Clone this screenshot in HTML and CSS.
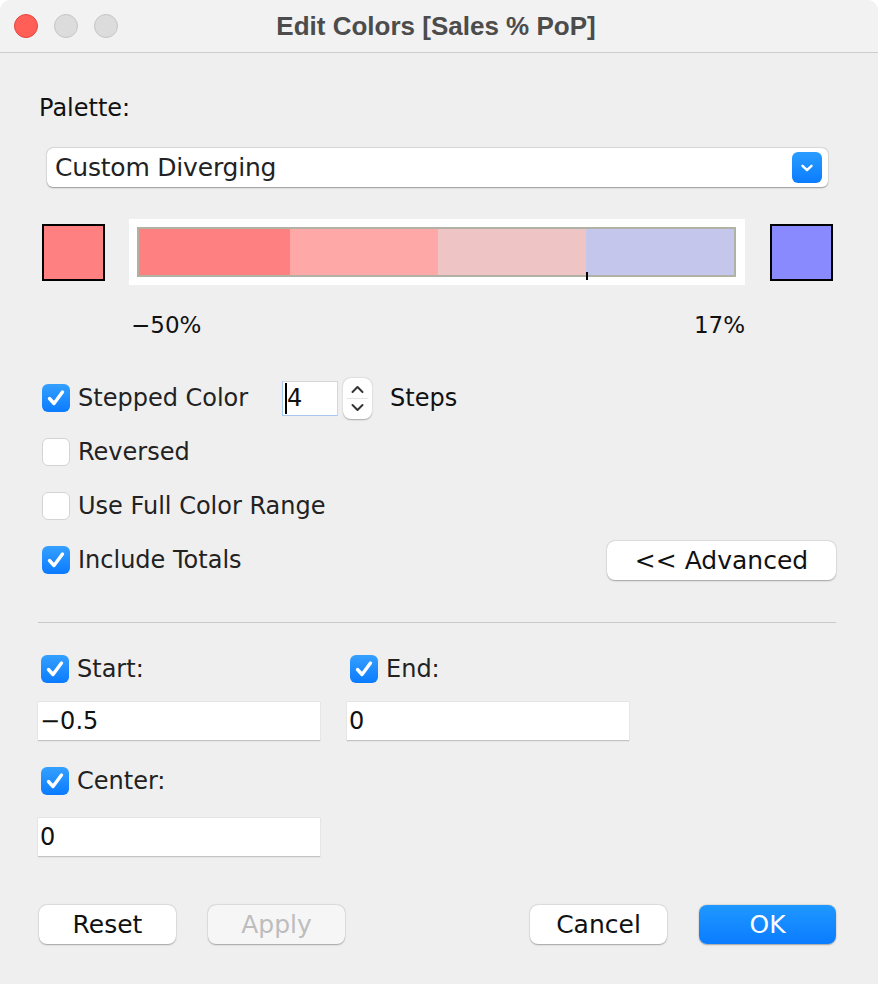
FILE: index.html
```html
<!DOCTYPE html>
<html>
<head>
<meta charset="utf-8">
<title>Edit Colors</title>
<link rel="stylesheet" href="styles.css">
</head>
<body>
<div class="window">
  <div class="titlebar">
    <div class="lights">
      <span class="light red"></span>
      <span class="light gray"></span>
      <span class="light gray"></span>
    </div>
    <div class="title">Edit Colors [Sales % PoP]</div>
    <div></div>
  </div>

  <div class="content">
    <div class="palette-label">Palette:</div>

    <div class="select">
      <span class="select-text">Custom Diverging</span>
      <span class="select-btn">
        <svg width="14" height="10" viewBox="0 0 14 10"><path d="M2.5 2.8 L7 7.2 L11.5 2.8" fill="none" stroke="#fff" stroke-width="2.4" stroke-linecap="round" stroke-linejoin="round"/></svg>
      </span>
    </div>

    <div class="ramp-row">
      <div class="swatch swatch-start"></div>
      <div class="ramp-panel">
        <div class="ramp">
          <div class="seg seg1"></div>
          <div class="seg seg2"></div>
          <div class="seg seg3"></div>
          <div class="seg seg4"></div>
          <span class="tick"></span>
        </div>
      </div>
      <div class="swatch swatch-end"></div>
    </div>

    <div class="ramp-labels">
      <span>−50%</span>
      <span>17%</span>
    </div>

    <div class="options">
      <div class="opt-row">
        <label class="check-label stepped">
          <span class="cb on"><svg width="28" height="28" viewBox="0 0 28 28"><path d="M7.5 14.5 L12 19.5 L20.5 8" fill="none" stroke="#fff" stroke-width="3.4" stroke-linecap="round" stroke-linejoin="round"/></svg></span>
          <span>Stepped Color</span>
        </label>
        <div class="num-input"><span class="caret"></span>4</div>
        <div class="stepper">
          <svg width="29" height="41" viewBox="0 0 29 41">
            <path d="M9.5 14 L14.5 9 L19.5 14" fill="none" stroke="#333" stroke-width="2" stroke-linecap="round" stroke-linejoin="round"/>
            <line x1="4" y1="20.5" x2="25" y2="20.5" stroke="#e4e4e4" stroke-width="1"/>
            <path d="M9.5 27 L14.5 32 L19.5 27" fill="none" stroke="#333" stroke-width="2" stroke-linecap="round" stroke-linejoin="round"/>
          </svg>
        </div>
        <span class="steps-label">Steps</span>
      </div>
      <div class="opt-row">
        <label class="check-label">
          <span class="cb"></span>
          <span>Reversed</span>
        </label>
      </div>
      <div class="opt-row">
        <label class="check-label">
          <span class="cb"></span>
          <span>Use Full Color Range</span>
        </label>
      </div>
      <div class="opt-row between">
        <label class="check-label">
          <span class="cb on"><svg width="28" height="28" viewBox="0 0 28 28"><path d="M7.5 14.5 L12 19.5 L20.5 8" fill="none" stroke="#fff" stroke-width="3.4" stroke-linecap="round" stroke-linejoin="round"/></svg></span>
          <span>Include Totals</span>
        </label>
        <button class="btn advanced">&lt;&lt; Advanced</button>
      </div>
    </div>

    <div class="separator"></div>

    <div class="range-grid">
      <div class="range-col">
        <label class="check-label small">
          <span class="cb on"><svg width="28" height="28" viewBox="0 0 28 28"><path d="M7.5 14.5 L12 19.5 L20.5 8" fill="none" stroke="#fff" stroke-width="3.4" stroke-linecap="round" stroke-linejoin="round"/></svg></span>
          <span>Start:</span>
        </label>
        <div class="field">−0.5</div>
      </div>
      <div class="range-col">
        <label class="check-label small">
          <span class="cb on"><svg width="28" height="28" viewBox="0 0 28 28"><path d="M7.5 14.5 L12 19.5 L20.5 8" fill="none" stroke="#fff" stroke-width="3.4" stroke-linecap="round" stroke-linejoin="round"/></svg></span>
          <span>End:</span>
        </label>
        <div class="field">0</div>
      </div>
      <div class="range-col center-col">
        <label class="check-label small">
          <span class="cb on"><svg width="28" height="28" viewBox="0 0 28 28"><path d="M7.5 14.5 L12 19.5 L20.5 8" fill="none" stroke="#fff" stroke-width="3.4" stroke-linecap="round" stroke-linejoin="round"/></svg></span>
          <span>Center:</span>
        </label>
        <div class="field">0</div>
      </div>
    </div>

    <div class="footer">
      <div class="btn-group">
        <button class="btn">Reset</button>
        <button class="btn disabled">Apply</button>
      </div>
      <div class="btn-group">
        <button class="btn">Cancel</button>
        <button class="btn primary">OK</button>
      </div>
    </div>
  </div>
</div>
</body>
</html>
```

FILE: styles.css
```css
html, body {
  margin: 0;
  padding: 0;
  background: #ffffff;
}

.window {
  width: 878px;
  height: 984px;
  background: #efefef;
  border-radius: 11px 11px 0 0;
  overflow: hidden;
  font-family: "DejaVu Sans", "Liberation Sans", sans-serif;
  color: #1e1e1e;
}

.titlebar {
  height: 52px;
  background: #f2f2f2;
  border-bottom: 1px solid #cdcdcd;
  display: grid;
  grid-template-columns: 1fr auto 1fr;
  align-items: center;
}

.lights {
  display: flex;
  gap: 16px;
  padding-left: 14px;
}

.light {
  width: 24px;
  height: 24px;
  border-radius: 50%;
  box-sizing: border-box;
}

.light.red {
  background: #ff5f57;
  border: 1px solid #e2463f;
}

.light.gray {
  background: #dcdcdc;
  border: 1px solid #c5c5c5;
}

.title {
  font-family: "Liberation Sans", Arial, sans-serif;
  font-weight: bold;
  font-size: 26px;
  color: #4c4c4c;
  transform: translateX(-3px);
}

.content {
  padding: 0 42px 0 38px;
}

.palette-label {
  margin-top: 42px;
  font-size: 24px;
  line-height: 26px;
  padding-left: 1px;
  color: #111;
}

.select {
  margin-top: 27px;
  margin-left: 9px;
  width: 781px;
  height: 39px;
  box-sizing: border-box;
  background: #fff;
  border-radius: 6px;
  box-shadow: 0 0.5px 1.5px rgba(0, 0, 0, 0.35), 0 0 0 0.5px rgba(0, 0, 0, 0.06);
  display: flex;
  align-items: center;
  justify-content: space-between;
  padding: 0 6px 0 8px;
}

.select-text {
  font-size: 25px;
  color: #222;
  letter-spacing: -0.2px;
}

.select-btn {
  width: 30px;
  height: 31px;
  border-radius: 6px;
  background: linear-gradient(#2b9dff, #0a7cff);
  display: flex;
  align-items: center;
  justify-content: center;
}

.ramp-row {
  margin-top: 32px;
  height: 66px;
  display: flex;
  align-items: center;
}

.swatch {
  width: 63px;
  height: 57px;
  box-sizing: border-box;
  border: 2px solid #000;
}

.swatch-start {
  margin-left: 4px;
  background: #ff8080;
}

.swatch-end {
  margin-left: 25px;
  background: #8a8aff;
}

.ramp-panel {
  margin-left: 24px;
  width: 616px;
  height: 66px;
  box-sizing: border-box;
  background: #fff;
  padding: 8px 9px 8px 8px;
}

.ramp {
  position: relative;
  height: 50px;
  box-sizing: border-box;
  border: 2px solid #b1b1a6;
  display: flex;
}

.seg {
  flex: 1;
}

.seg1 { background: #ff8080; flex: 0 0 151px; }
.seg2 { background: #ffa8a8; }
.seg3 { background: #efc4c4; }
.seg4 { background: #c5c6eb; }

.tick {
  position: absolute;
  left: 447px;
  top: 43px;
  width: 2px;
  height: 8px;
  background: #000;
}

.ramp-labels {
  margin-top: 27px;
  width: 614px;
  padding-left: 93px;
  display: flex;
  justify-content: space-between;
  font-size: 23px;
  line-height: 26px;
  color: #111;
}

.options {
  margin-top: 33px;
}

.opt-row {
  height: 54px;
  display: flex;
  align-items: center;
}

.opt-row.between {
  justify-content: space-between;
}

.check-label {
  display: flex;
  align-items: center;
  gap: 8px;
  font-size: 24px;
  color: #222;
  padding-left: 4px;
}

.check-label.stepped {
  width: 240px;
}

.cb {
  width: 28px;
  height: 28px;
  box-sizing: border-box;
  border-radius: 6px;
  background: #fff;
  border: 1px solid #d3d3d3;
  flex: none;
  display: flex;
}

.cb.on {
  background: linear-gradient(#35a0ff, #0a7bff);
  border: none;
}

.num-input {
  width: 56px;
  height: 35px;
  box-sizing: border-box;
  background: #fff;
  border: 1px solid #d6d6d6;
  border-left-color: #a9c8f0;
  border-bottom-color: #a9c8f0;
  font-size: 24px;
  line-height: 33px;
  padding-left: 2px;
  display: flex;
  align-items: center;
  color: #111;
}

.caret {
  width: 2px;
  height: 31px;
  background: #000;
}

.stepper {
  margin-left: 5px;
  width: 29px;
  height: 41px;
  background: #fff;
  border-radius: 8px;
  box-shadow: 0 0.5px 1.5px rgba(0, 0, 0, 0.3);
  display: flex;
}

.steps-label {
  margin-left: 18px;
  font-size: 24px;
  color: #111;
}

.btn {
  font-family: "DejaVu Sans", "Liberation Sans", sans-serif;
  font-size: 25px;
  color: #111;
  width: 137px;
  height: 39px;
  background: #fff;
  border: none;
  border-radius: 8px;
  box-shadow: 0 0.5px 1.5px rgba(0, 0, 0, 0.3), 0 0 0 0.5px rgba(0, 0, 0, 0.05);
  padding: 0;
}

.btn.advanced {
  width: 229px;
}

.btn.disabled {
  background: #f6f6f6;
  color: #bdbdbd;
}

.btn.primary {
  background: linear-gradient(#1f98ff, #0a7cff);
  color: #fff;
}

.separator {
  margin-top: 35px;
  width: 798px;
  height: 1px;
  background: #c9c9c9;
}

.range-grid {
  margin-top: 32px;
  display: grid;
  grid-template-columns: 282px 282px;
  column-gap: 27px;
  row-gap: 26px;
}

.range-col {
  display: flex;
  flex-direction: column;
}

.check-label.small {
  padding-left: 3px;
}

.field {
  margin-top: 19px;
  height: 39px;
  box-sizing: border-box;
  background: #fff;
  border-bottom: 1px solid #c4c4c4;
  box-shadow: 0 0 0 0.5px rgba(0, 0, 0, 0.08);
  font-size: 24px;
  line-height: 38px;
  padding-left: 2px;
  color: #111;
}

.center-col .field {
  margin-top: 23px;
}

.footer {
  margin-top: 48px;
  display: flex;
  justify-content: space-between;
  padding-left: 1px;
}

.btn-group {
  display: flex;
  gap: 32px;
}
```
